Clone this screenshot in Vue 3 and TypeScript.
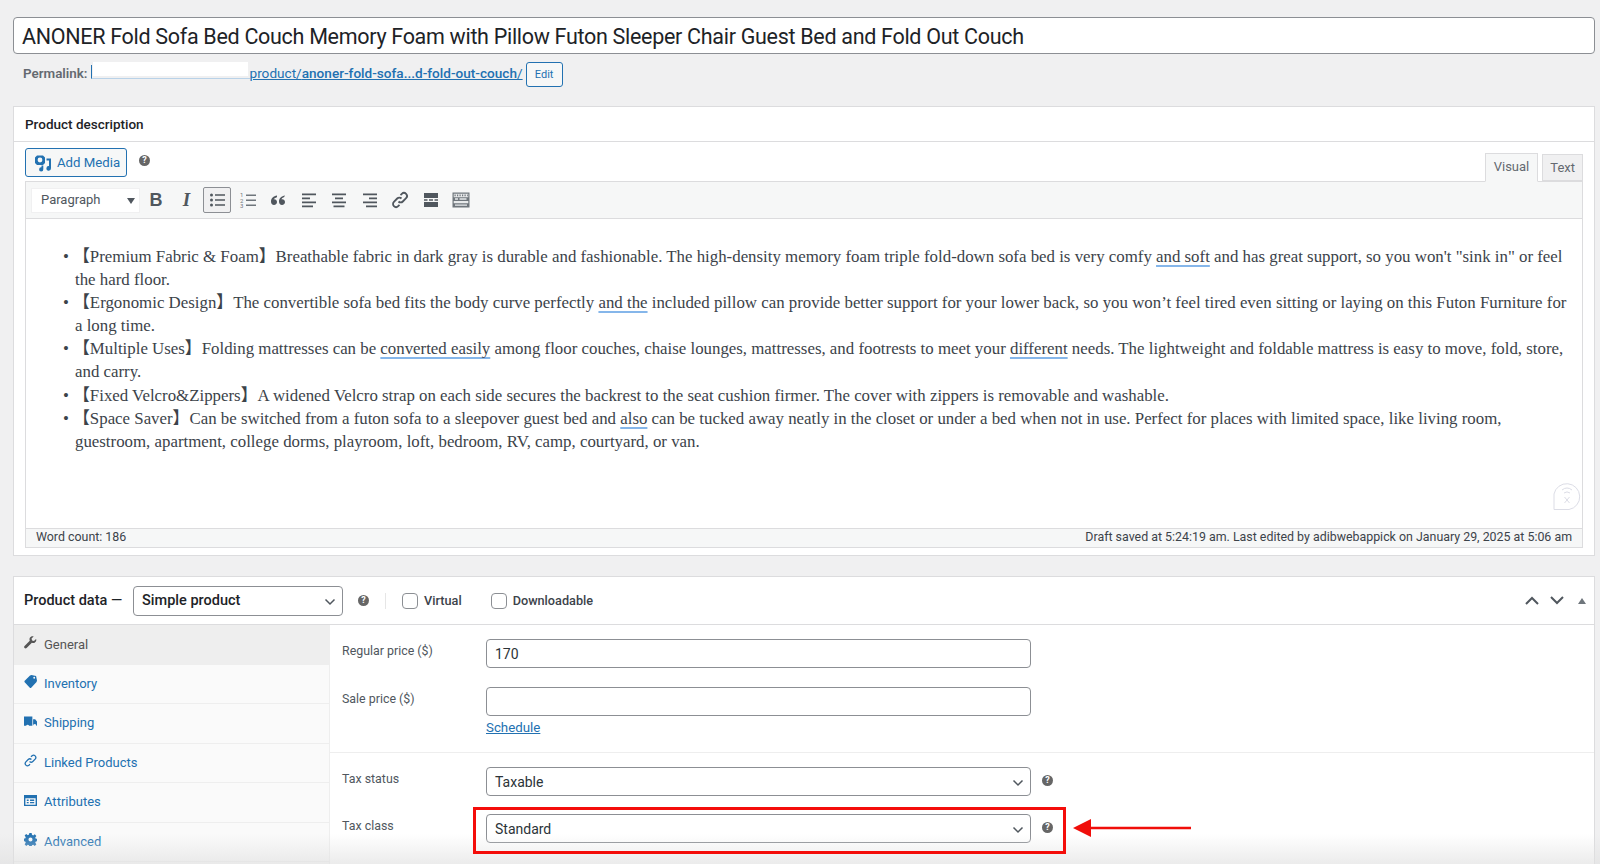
<script setup lang="ts">
interface Tab { label: string; icon: string; active?: boolean }
const tabs: Tab[] = [
  { label: 'General', icon: 'wrench', active: true },
  { label: 'Inventory', icon: 'tag' },
  { label: 'Shipping', icon: 'truck' },
  { label: 'Linked Products', icon: 'link' },
  { label: 'Attributes', icon: 'card' },
  { label: 'Advanced', icon: 'gear' },
]
</script>

<template>
  <div class="page">
    <div class="title">ANONER Fold Sofa Bed Couch Memory Foam with Pillow Futon Sleeper Chair Guest Bed and Fold Out Couch</div>

    <div class="permalink">
      <strong class="perm-label">Permalink:</strong>
      <span class="perm-link">
        <span class="perm-host"><span class="perm-mask"></span></span>product/<b>anoner-fold-sofa...d-fold-out-couch</b>/
      </span>
      <span class="edit-btn">Edit</span>
    </div>

    <section class="box desc">
      <h2 class="box-head">Product description</h2>
      <div class="editor">
        <div class="media-row">
          <span class="media-btn">
            <svg width="18" height="18" viewBox="0 0 18 18" fill="#2271b1"><path fill-rule="evenodd" d="M1 3.500 3 1.500h6l2 2v5.500l-2 2H3l-2-2zM6 3.600a2.400 2.400 0 1 0 0 4.800 2.400 2.400 0 0 0 0-4.800z"/><path d="M12.500 4.500h4.500v9.800a2.300 2.300 0 1 1-2-2.200V6.500h-2.500z"/><path d="M7.500 11.500h1.800v3.800a2.100 2.100 0 1 1-1.800-2z"/></svg>
            Add Media
          </span>
          <span class="help media-help">?</span>
          <div class="tabs-right">
            <span class="etab active">Visual</span>
            <span class="etab">Text</span>
          </div>
        </div>

        <div class="toolbar">
          <div class="format">Paragraph<i class="tri"></i></div>
          <span class="tool glyph-b">B</span>
          <span class="tool glyph-i">I</span>
          <span class="tool pressed">
            <svg width="20" height="20" viewBox="0 0 20 20" fill="#50575e"><circle cx="4.500" cy="5" r="1.500"/><circle cx="4.500" cy="10" r="1.500"/><circle cx="4.500" cy="15" r="1.500"/><path d="M8 4.200h10v1.600H8zM8 9.200h10v1.600H8zM8 14.200h10v1.600H8z"/></svg>
          </span>
          <span class="tool">
            <svg width="20" height="20" viewBox="0 0 20 20" fill="#6f767c"><path d="M8 4.500h10v1.400H8zM8 9.500h10v1.400H8zM8 14.500h10v1.400H8z"/><text x="2" y="7" font-size="6" font-family="Roboto, sans-serif">1</text><text x="2" y="12.500" font-size="6" font-family="Roboto, sans-serif">2</text><text x="2" y="18" font-size="6" font-family="Roboto, sans-serif">3</text></svg>
          </span>
          <span class="tool">
            <svg width="20" height="20" viewBox="0 0 20 20" fill="#50575e"><path d="M9 5.500C5.500 6 3 8 3 11.500 3 13.500 4.200 15 6 15s3-1.300 3-2.900-1.200-2.800-2.800-2.800c-.3 0-.5 0-.7.100C6.800 8.200 7.800 7.600 9 7.300zM17 5.500c-3.500.5-6 2.500-6 6 0 2 1.200 3.500 3 3.500s3-1.300 3-2.900-1.200-2.800-2.800-2.800c-.3 0-.5 0-.7.100.3-1.200 1.300-1.800 2.500-2.100z"/></svg>
          </span>
          <span class="tool">
            <svg width="20" height="20" viewBox="0 0 20 20" fill="#50575e"><path d="M3 3.500h14v1.800H3zM3 7.500h8v1.800H3zM3 11.500h14v1.800H3zM3 15.500h11v1.800H3z"/></svg>
          </span>
          <span class="tool">
            <svg width="20" height="20" viewBox="0 0 20 20" fill="#50575e"><path d="M3 3.500h14v1.800H3zM6 7.500h8v1.800H6zM3 11.500h14v1.800H3zM4.500 15.500h11v1.800h-11z"/></svg>
          </span>
          <span class="tool">
            <svg width="20" height="20" viewBox="0 0 20 20" fill="#50575e"><path d="M3 3.500h14v1.800H3zM9 7.500h8v1.800H9zM3 11.500h14v1.800H3zM6 15.500h11v1.800H6z"/></svg>
          </span>
          <span class="tool">
            <svg width="20" height="20" viewBox="0 0 20 20" fill="none" stroke="#50575e" stroke-width="1.800"><path d="M8.500 11.500a3 3 0 0 0 4.300 0l3.300-3.300a3 3 0 0 0-4.300-4.300L10.500 5.200"/><path d="M11.500 8.500a3 3 0 0 0-4.300 0l-3.300 3.300a3 3 0 0 0 4.300 4.300l1.300-1.300"/></svg>
          </span>
          <span class="tool">
            <svg width="20" height="20" viewBox="0 0 20 20" fill="#50575e"><path d="M3 3h14v5H3zM3 12h14v5H3zM3 9.200h3.500v1.600H3zM8 9.200h4v1.600H8zM13.500 9.200H17v1.600h-3.500z"/></svg>
          </span>
          <span class="tool">
            <svg width="20" height="20" viewBox="0 0 20 20"><rect x="1.500" y="2.500" width="17" height="15" fill="#6f767c"/><path d="M2.700 3.700h14.600v3.600H2.700zM2.700 11h14.600v2.200H2.700z" fill="#e8eaeb"/><path d="M3.500 4.500h1.200v1.800H3.500zM6 4.500h1.200v1.800H6zM8.500 4.500h1.200v1.800H8.500zM11 4.500h1.200v1.800H11zM13.500 4.500h1.200v1.800h-1.200zM16 4.500h.8v1.800H16z" fill="#6f767c"/><path d="M4 8.300h3v1.400H4zM8.500 8.300h7v1.400h-7zM4 14.400h12v1.400H4z" fill="#e8eaeb"/></svg>
          </span>
        </div>

        <div class="content">
          <ul>
            <li>【Premium Fabric &amp; Foam】Breathable fabric in dark gray is durable and fashionable. The high-density memory foam triple fold-down sofa bed is very comfy <u>and soft</u> and has great support, so you won't "sink in" or feel the hard floor.</li>
            <li>【Ergonomic Design】The convertible sofa bed fits the body curve perfectly <u>and the</u> included pillow can provide better support for your lower back, so you won’t feel tired even sitting or laying on this Futon Furniture for a long time.</li>
            <li>【Multiple Uses】Folding mattresses can be <u>converted easily</u> among floor couches, chaise lounges, mattresses, and footrests to meet your <u>different</u> needs. The lightweight and foldable mattress is easy to move, fold, store, and carry.</li>
            <li>【Fixed Velcro&amp;Zippers】A widened Velcro strap on each side secures the backrest to the seat cushion firmer. The cover with zippers is removable and washable.</li>
            <li>【Space Saver】Can be switched from a futon sofa to a sleepover guest bed and <u>also</u> can be tucked away neatly in the closet or under a bed when not in use. Perfect for places with limited space, like living room, guestroom, apartment, college dorms, playroom, loft, bedroom, RV, camp, courtyard, or van.</li>
          </ul>
          <svg class="float-badge" width="30" height="30" viewBox="0 0 30 30" fill="none" stroke="#dcdde6" stroke-width="1"><path d="M2 29.500V14a13 13 0 1 1 15 15.500z"/><path d="M10 10a8 8 0 0 1 10 0M12 13a5 5 0 0 1 6 0M12.500 17l5 6M17.500 17l-5 6"/></svg>
        </div>

        <div class="status">
          <span>Word count: 186</span>
          <span>Draft saved at 5:24:19 am. Last edited by adibwebappick on January 29, 2025 at 5:06 am</span>
        </div>
      </div>
    </section>

    <section class="box data">
      <header class="data-head">
        <span class="data-title">Product data —</span>
        <div class="select type-select">Simple product<svg class="chev" width="12" height="8" viewBox="0 0 12 8" fill="none" stroke="#50575e" stroke-width="1.500"><path d="M1.500 1.500 6 6l4.500-4.500"/></svg></div>
        <span class="help head-help">?</span>
        <span class="sep"></span>
        <label class="check virtual"><i class="box-check"></i>Virtual</label>
        <label class="check"><i class="box-check"></i>Downloadable</label>
        <div class="head-arrows">
          <svg width="14" height="9" viewBox="0 0 14 9" fill="none" stroke="#50575e" stroke-width="2"><path d="M1 8l6-6 6 6"/></svg>
          <svg width="14" height="9" viewBox="0 0 14 9" fill="none" stroke="#50575e" stroke-width="2"><path d="M1 1l6 6 6-6"/></svg>
          <svg class="collapse" width="8" height="6" viewBox="0 0 8 6" fill="#6f767c"><path d="M4 0l4 6H0z"/></svg>
        </div>
      </header>

      <div class="data-body">
        <nav class="side">
          <a v-for="t in tabs" :key="t.label" class="side-tab" :class="{ active: t.active }">
            <svg class="side-icon" width="13" height="13" viewBox="0 0 14 14" fill="currentColor">
              <path v-if="t.icon === 'wrench'" d="M13 3.200l-2.300 2.200-2-.6-.6-2L10.400.5C8.800-.1 7.100.6 6.300 2c-.5 1-.5 2-.1 3L.6 10.800c-.7.700-.6 1.600 0 2.200s1.500.7 2.200 0L8.500 7.400c1 .4 2.100.3 3-.2 1.500-.9 2.100-2.500 1.500-4z"/>
              <path v-else-if="t.icon === 'tag'" d="M6.500.5 8 0l5 1 1 5-.5 1.500-6 6.500h-1L.5 7.500v-1zM11 2a1 1 0 1 0 0 2 1 1 0 0 0 0-2z"/>
              <path v-else-if="t.icon === 'truck'" d="M0 1.500h9v10H5.500a1.700 1.700 0 0 0-3.200 0H0zM9.800 4.500h2.200l2 2.500v4.500h-.7a1.700 1.700 0 0 0-3.500 0z"/>
              <path v-else-if="t.icon === 'link'" fill="none" stroke="currentColor" stroke-width="1.400" d="M6 8a2.500 2.500 0 0 0 3.500 0l2.700-2.700a2.500 2.500 0 0 0-3.500-3.500L7.500 3M8 6a2.500 2.500 0 0 0-3.500 0L1.800 8.700a2.500 2.500 0 0 0 3.500 3.500L6.500 11"/>
              <path v-else-if="t.icon === 'card'" fill-rule="evenodd" d="M0 1h14v12H0zM1.500 4.500v7h11v-7zM3 6h2v1.500H3zM6.500 6H11v1.500H6.500zM3 8.500h2V10H3zM6.500 8.500H11V10H6.500z"/>
              <path v-else fill-rule="evenodd" d="M5.800 0h2.400l.4 2 1.300.6L11.600 1.400l1.700 1.700-1.200 1.700.6 1.300 2 .3v2.400l-2 .4-.6 1.300 1.200 1.700-1.700 1.700-1.700-1.200-1.300.6-.4 2H5.800l-.4-2-1.300-.6-1.700 1.200-1.700-1.700 1.200-1.700-.6-1.300-2-.4V6.100l2-.3.6-1.300-1.200-1.700 1.700-1.700 1.700 1.200 1.300-.6zM7 4.800a2.200 2.200 0 1 0 0 4.400 2.200 2.200 0 0 0 0-4.400z"/>
            </svg>
            {{ t.label }}
          </a>
        </nav>

        <div class="panel">
          <div class="group first">
            <div class="field">
              <label>Regular price ($)</label>
              <div class="input">170</div>
            </div>
            <div class="field sale">
              <label>Sale price ($)</label>
              <div class="input"></div>
            </div>
            <a class="schedule">Schedule</a>
          </div>
          <div class="group second">
            <div class="field">
              <label>Tax status</label>
              <div class="input select-wide">Taxable<svg class="chev" width="12" height="8" viewBox="0 0 12 8" fill="none" stroke="#50575e" stroke-width="1.500"><path d="M1.500 1.500 6 6l4.500-4.500"/></svg></div>
              <span class="help field-help">?</span>
            </div>
            <div class="field tax-class">
              <label>Tax class</label>
              <div class="input select-wide">Standard<svg class="chev" width="12" height="8" viewBox="0 0 12 8" fill="none" stroke="#50575e" stroke-width="1.500"><path d="M1.500 1.500 6 6l4.500-4.500"/></svg></div>
              <span class="help field-help">?</span>
              <span class="red-box"></span>
              <svg class="red-arrow" width="118" height="18" viewBox="0 0 118 18" fill="#f00e0a"><path d="M0 9 18 0v7.800h100v2.400H18V18z"/></svg>
            </div>
          </div>
        </div>
      </div>
    </section>

    <div class="fade"></div>
  </div>
</template>

<style>
html, body { margin: 0; background: #f0f0f1; }
</style>

<style scoped>
.page {
  position: relative;
  box-sizing: border-box;
  height: 864px;
  overflow: hidden;
  padding: 17px 5px 0 13px;
  background: #f0f0f1;
  font-family: Roboto, "Liberation Sans", sans-serif;
  color: #3c434a;
}
.title {
  box-sizing: border-box;
  height: 37px;
  padding: 1px 8px 0;
  border: 1px solid #8c8f94;
  border-radius: 4px;
  background: #fff;
  color: #1d2327;
  font-size: 21.500px;
  letter-spacing: -.3px;
  line-height: 35px;
  white-space: nowrap;
}
.permalink {
  display: flex;
  align-items: center;
  height: 25px;
  margin-top: 8px;
  padding-left: 10px;
  font-size: 13.600px;
  color: #646970;
}
.perm-label { font-weight: 600; margin-right: 3px; margin-top: -3px; font-size: 13.400px; }
.perm-link { color: #2271b1; text-decoration: underline; white-space: nowrap; margin-top: -3px; }
.perm-link b { font-weight: 500; }
.perm-host {
  position: relative;
  display: inline-block;
  box-sizing: border-box;
  width: 159px;
  height: 14px;
  margin-bottom: -1px;
  border-left: 1px solid #2271b1;
  border-bottom: 1px solid #b9d2e8;
}
.perm-mask { position: absolute; inset: -3px 2px 2px 1px; background: #fff; }
.edit-btn {
  box-sizing: border-box;
  width: 37px;
  height: 25px;
  margin-left: 3px;
  border: 1px solid #2271b1;
  border-radius: 3px;
  background: #f6f7f7;
  color: #2271b1;
  font-size: 11px;
  line-height: 23px;
  text-align: center;
}
.box {
  box-sizing: border-box;
  border: 1px solid #dcdcde;
  background: #fff;
}
.desc { height: 450px; margin-top: 19px; }
.box-head {
  box-sizing: border-box;
  height: 35px;
  margin: 0;
  padding: 0 11px;
  border-bottom: 1px solid #dcdcde;
  color: #1d2327;
  font-size: 13.500px;
  font-weight: 500;
  line-height: 34px;
}
.editor { padding: 0 11px; }
.media-row {
  display: flex;
  align-items: flex-start;
  height: 39px;
}
.media-btn {
  box-sizing: border-box;
  display: flex;
  align-items: center;
  gap: 5px;
  width: 102px;
  height: 29px;
  margin-top: 6px;
  padding-left: 8px;
  border: 1px solid #2271b1;
  border-radius: 3px;
  background: #f6f7f7;
  color: #2271b1;
  font-size: 13.200px;
}
.help {
  display: inline-block;
  width: 11px;
  height: 11px;
  border-radius: 50%;
  background: #666;
  color: #fff;
  font-size: 9px;
  font-weight: 700;
  line-height: 11px;
  text-align: center;
}
.media-help { margin: 13px 0 0 12px; }
.tabs-right {
  display: flex;
  align-items: flex-end;
  gap: 4px;
  height: 39px;
  margin-left: auto;
}
.etab {
  box-sizing: border-box;
  height: 27px;
  padding: 0 7px;
  border: 1px solid #dcdcde;
  background: #f0f0f1;
  color: #646970;
  font-size: 13px;
  line-height: 26px;
}
.etab.active {
  height: 29px;
  margin-bottom: -1px;
  padding: 0 8px;
  border-bottom-color: #f6f7f7;
  background: #f6f7f7;
  line-height: 26px;
}
.toolbar {
  box-sizing: border-box;
  display: flex;
  align-items: center;
  height: 38px;
  padding-left: 5px;
  border: 1px solid #dcdcde;
  background: #f6f7f7;
}
.format {
  box-sizing: border-box;
  position: relative;
  width: 109px;
  height: 25px;
  margin-right: 2px;
  padding-left: 9px;
  background: #fff;
  border: 1px solid #f0f0f1;
  color: #50575e;
  font-size: 13px;
  line-height: 22px;
}
.tri {
  position: absolute;
  right: 4px;
  top: 9px;
  border: 4px solid transparent;
  border-top: 6px solid #50575e;
  border-bottom: 0;
}
.tool {
  box-sizing: border-box;
  display: flex;
  align-items: center;
  justify-content: center;
  width: 28px;
  height: 26px;
  margin-right: 2.500px;
  color: #50575e;
}
.glyph-b { font: 700 18px "Liberation Sans", sans-serif; }
.glyph-i { font: italic 700 19px "Liberation Serif", serif; }
.pressed {
  border: 1px solid #8c8f94;
  border-radius: 2px;
  background: #f0f0f1;
}
.content {
  position: relative;
  box-sizing: border-box;
  height: 309px;
  border-left: 1px solid #dcdcde;
  border-right: 1px solid #dcdcde;
  color: #3c434a;
  font-family: "Liberation Serif", "Noto Sans CJK SC", serif;
  font-size: 16.850px;
  line-height: 23.100px;
}
.content ul { margin: 0; padding: 26px 8px 0 49px; list-style: none; }
.content li { position: relative; text-indent: -2px; }
.content li::before {
  content: "•";
  position: absolute;
  left: -10px;
  top: 0;
}
.content u {
  text-decoration: underline #85b6ea 2px;
  text-underline-offset: 3px;
}
.float-badge { position: absolute; right: 0; top: 261px; }
.status {
  box-sizing: border-box;
  display: flex;
  justify-content: space-between;
  height: 20px;
  padding: 0 10px;
  border: 1px solid #dcdcde;
  background: #f6f7f7;
  color: #3c434a;
  font-size: 12.400px;
  line-height: 15px;
}
.data { position: relative; height: 300px; margin-top: 20px; }
.data-head {
  box-sizing: border-box;
  display: flex;
  align-items: center;
  height: 48px;
  padding-left: 10px;
  border-bottom: 1px solid #dcdcde;
}
.data-title { color: #1d2327; font-size: 14.500px; font-weight: 500; margin-right: 11px; }
.select {
  box-sizing: border-box;
  position: relative;
  width: 210px;
  height: 30px;
  padding-left: 8px;
  border: 1px solid #8c8f94;
  border-radius: 4px;
  background: #fff;
  color: #1d2327;
  font-size: 14.500px;
  font-weight: 500;
  line-height: 28px;
}
.chev { position: absolute; right: 6px; top: 11px; }
.head-help { margin-left: 15px; }
.sep { width: 1px; height: 16px; margin: 0 16px 0 16px; background: #e6e6e6; }
.check {
  display: flex;
  align-items: center;
  color: #3c434a;
  font-size: 12.700px;
  font-weight: 500;
}
.virtual { margin-right: 29px; }
.box-check {
  box-sizing: border-box;
  width: 16px;
  height: 16px;
  margin-right: 6px;
  border: 1px solid #8c8f94;
  border-radius: 4px;
  background: #fff;
}
.head-arrows {
  display: flex;
  align-items: center;
  gap: 11px;
  margin-left: auto;
  padding-right: 8px;
}
.collapse { margin-left: 3px; }
.data-body { display: flex; height: 250px; }
.side {
  box-sizing: border-box;
  width: 316px;
  background: #fafafa;
  border-right: 1px solid #eee;
}
.side-tab {
  box-sizing: border-box;
  display: flex;
  align-items: center;
  height: 39.500px;
  padding: 0 0 1px 10px;
  border-bottom: 1px solid #eee;
  color: #2271b1;
  font-size: 13px;
}
.side-tab.active { background: #eee; color: #555; border-bottom: 0; }
.side-icon { margin-right: 7px; margin-top: -3px; flex: none; }
.panel { flex: 1; }
.group.first {
  box-sizing: border-box;
  height: 128px;
  padding-top: 14px;
  border-bottom: 1px solid #eee;
}
.group.second { padding-top: 14px; }
.field {
  position: relative;
  display: flex;
  align-items: flex-start;
  height: 29px;
}
.field label {
  box-sizing: border-box;
  width: 156px;
  padding-left: 12px;
  color: #50575e;
  font-size: 12.400px;
  line-height: 24px;
}
.input {
  box-sizing: border-box;
  position: relative;
  width: 545px;
  height: 29px;
  padding-left: 8px;
  border: 1px solid #8c8f94;
  border-radius: 4px;
  background: #fff;
  color: #2c3338;
  font-size: 14px;
  line-height: 28px;
}
.sale { margin-top: 19px; }
.schedule {
  display: block;
  margin: 2px 0 0 156px;
  color: #2271b1;
  font-size: 13.300px;
  line-height: 20px;
  text-decoration: underline;
}
.field-help { margin: 8px 0 0 11px; }
.tax-class { margin-top: 18px; }
.red-box {
  position: absolute;
  z-index: 2;
  left: 143px;
  top: -7px;
  box-sizing: border-box;
  width: 593px;
  height: 47px;
  border: 3px solid #f40d0a;
}
.red-arrow { position: absolute; z-index: 2; left: 743px; top: 5px; }
.fade {
  position: absolute;
  z-index: 1;
  left: 0;
  right: 0;
  bottom: 0;
  height: 30px;
  background: linear-gradient(rgba(225, 225, 225, 0), rgba(225, 225, 225, .65));
  pointer-events: none;
}
</style>
